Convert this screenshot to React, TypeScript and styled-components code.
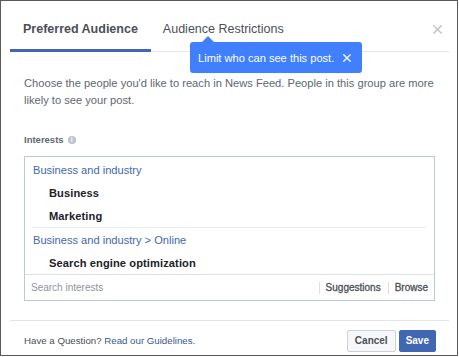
import React from "react";
import styled, { createGlobalStyle } from "styled-components";

const Global = createGlobalStyle`
  html, body { margin: 0; padding: 0; background: #fff; }
  body { font-family: "Liberation Sans", Arial, Helvetica, sans-serif; -webkit-font-smoothing: antialiased; }
  * { box-sizing: border-box; }
`;

const Dialog = styled.div`
  position: relative;
  width: 458px;
  height: 356px;
  border: 1px solid #5a5a5a;
  background: #fff;
  display: flex;
  flex-direction: column;
`;

const Header = styled.div`
  display: flex;
  align-items: flex-start;
  margin: 0 8px 0 9px;
  border-bottom: 1px solid #e5e5e5;
  height: 51px;
`;

const Tab = styled.div<{ $active?: boolean }>`
  padding: 20px 13px 0;
  height: 51px;
  margin-bottom: -1px;
  font-size: 12.5px;
  line-height: 17px;
  color: #4b4f56;
  font-weight: ${(p) => (p.$active ? "bold" : "normal")};
  border-bottom: 3px solid ${(p) => (p.$active ? "#4267b2" : "transparent")};
  padding-left: ${(p) => (p.$active ? "13px" : "12px")};
`;

const Close = styled.div`
  margin-left: auto;
  margin-top: 22px;
  margin-right: 6px;
  width: 12px;
  height: 12px;
  display: flex;
  align-items: center;
  justify-content: center;
`;

const Tooltip = styled.div`
  position: absolute;
  left: 189px;
  top: 41px;
  width: 172px;
  height: 31px;
  background: #4080ff;
  border-radius: 3px;
  color: #fff;
  font-size: 11.1px;
  display: flex;
  align-items: center;
  padding: 0 11px 0 8px;
  white-space: nowrap;
  &::before {
    content: "";
    position: absolute;
    left: 12px;
    top: -6px;
    border-left: 6px solid transparent;
    border-right: 6px solid transparent;
    border-bottom: 6px solid #4080ff;
  }
`;

const TipText = styled.span`
  flex: 1;
`;

const TipClose = styled.span`
  display: flex;
  margin-left: 6px;
`;

const Body = styled.div`
  padding: 23px 22px 0 23px;
  flex: 1;
`;

const Desc = styled.p`
  margin: 0;
  font-size: 11.15px;
  line-height: 17px;
  color: #606770;
`;

const Label = styled.div`
  margin-top: 24px;
  font-size: 9.5px;
  line-height: 14px;
  font-weight: bold;
  color: #606770;
  display: flex;
  align-items: center;
  gap: 4px;
`;

const Info = styled.span`
  width: 8px;
  height: 8px;
  border-radius: 50%;
  background: #bec2c9;
  color: #fff;
  font-size: 7px;
  line-height: 8px;
  text-align: center;
  font-weight: bold;
`;

const Box = styled.div`
  margin-top: 9px;
  border: 1px solid #bdc7d8;
  display: flex;
  flex-direction: column;
`;

const List = styled.div`
  padding: 1px 8px 0;
`;

const Group = styled.div`
  & + & {
    border-top: 1px solid #e9ebee;
  }
`;

const Row = styled.div<{ $category?: boolean }>`
  height: 23px;
  display: flex;
  align-items: center;
  font-size: 11.1px;
  padding-left: ${(p) => (p.$category ? "0" : "16px")};
  color: ${(p) => (p.$category ? "#4267b2" : "#1d2129")};
  font-weight: ${(p) => (p.$category ? "normal" : "bold")};
  letter-spacing: ${(p) => (p.$category ? "0" : "0.1px")};
`;

const SearchRow = styled.div`
  height: 26px;
  border-top: 1px solid #dddfe2;
  display: flex;
  align-items: center;
  padding: 0 6px 0 6px;
`;

const SearchPlaceholder = styled.span`
  flex: 1;
  font-size: 10px;
  color: #90949c;
`;

const SearchLink = styled.span`
  font-size: 10px;
  color: #4b4f56;
  -webkit-text-stroke: 0.3px #4b4f56;
  display: flex;
  align-items: center;
  &::before {
    content: "";
    width: 1px;
    height: 12px;
    background: #dddfe2;
    margin: 0 6px 0 7px;
  }
`;

const Footer = styled.div`
  margin: 0 8px 0 9px;
  border-top: 1px solid #e5e5e5;
  height: 35px;
  display: flex;
  align-items: flex-start;
  padding: 9px 13px 0 14px;
`;

const FooterText = styled.div`
  flex: 1;
  font-size: 9.7px;
  color: #4b4f56;
  line-height: 22px;
`;

const Link = styled.span`
  color: #365899;
`;

const Button = styled.button<{ $primary?: boolean }>`
  height: 22px;
  padding: 0 ${(p) => (p.$primary ? "6px" : "7px")};
  border-radius: 2px;
  font-family: inherit;
  font-size: 10px;
  font-weight: bold;
  border: 1px solid ${(p) => (p.$primary ? "#4267b2" : "#ced0d4")};
  background: ${(p) => (p.$primary ? "#4267b2" : "#f6f7f9")};
  color: ${(p) => (p.$primary ? "#fff" : "#4b4f56")};
  margin-left: ${(p) => (p.$primary ? "3px" : "0")};
  line-height: 20px;
`;

const Ex = ({ color, size }: { color: string; size: number }) => (
  <svg width={size} height={size} viewBox="0 0 10 10">
    <path d="M1 1 L9 9 M9 1 L1 9" stroke={color} strokeWidth="1.6" strokeLinecap="square" />
  </svg>
);

export default function App() {
  return (
    <>
      <Global />
      <Dialog>
        <Header>
          <Tab $active>Preferred Audience</Tab>
          <Tab>Audience Restrictions</Tab>
          <Close>
            <Ex color="#bec2c9" size={9} />
          </Close>
        </Header>
        <Tooltip>
          <TipText>Limit who can see this post.</TipText>
          <TipClose>
            <Ex color="#fff" size={8} />
          </TipClose>
        </Tooltip>
        <Body>
          <Desc>
            Choose the people you'd like to reach in News Feed. People in this group are more
            likely to see your post.
          </Desc>
          <Label>
            Interests <Info>i</Info>
          </Label>
          <Box>
            <List>
              <Group>
                <Row $category>Business and industry</Row>
                <Row>Business</Row>
                <Row>Marketing</Row>
              </Group>
              <Group>
                <Row $category>Business and industry &gt; Online</Row>
                <Row>Search engine optimization</Row>
              </Group>
            </List>
            <SearchRow>
              <SearchPlaceholder>Search interests</SearchPlaceholder>
              <SearchLink>Suggestions</SearchLink>
              <SearchLink>Browse</SearchLink>
            </SearchRow>
          </Box>
        </Body>
        <Footer>
          <FooterText>
            Have a Question? <Link>Read our Guidelines.</Link>
          </FooterText>
          <Button>Cancel</Button>
          <Button $primary>Save</Button>
        </Footer>
      </Dialog>
    </>
  );
}
